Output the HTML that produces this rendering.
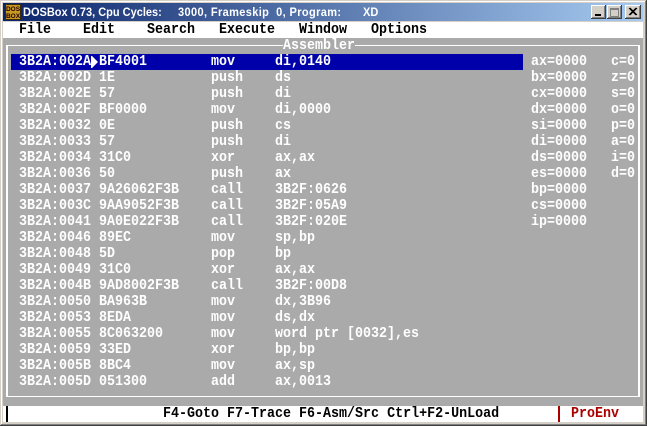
<!DOCTYPE html>
<html><head><meta charset="utf-8"><style>
html,body{margin:0;padding:0;background:#d4d0c8}
#w{position:relative;width:647px;height:426px;overflow:hidden;background:#d4d0c8}
#w div{position:absolute}
.t{font:bold 15px/16px "Liberation Mono",monospace;white-space:pre;color:#fff;height:16px;transform:scaleX(.889);transform-origin:0 0}
.k{color:#000}
.h{font:bold 12px/16px "Liberation Sans",sans-serif;color:#fff;white-space:pre;top:4px;height:16px;transform:scaleX(.917);transform-origin:0 0}
</style></head><body><div id="w">
<div style="left:0;top:0;width:647px;height:1px;background:#d4d0c8"></div>
<div style="left:1px;top:1px;width:644px;height:1px;background:#fff"></div>
<div style="left:1px;top:1px;width:1px;height:423px;background:#fff"></div>
<div style="left:645px;top:1px;width:1px;height:424px;background:#808080"></div>
<div style="left:1px;top:424px;width:645px;height:1px;background:#808080"></div>
<div style="left:646px;top:0;width:1px;height:426px;background:#404040"></div>
<div style="left:0;top:425px;width:647px;height:1px;background:#404040"></div>

<div style="left:3px;top:3px;width:640px;height:18px;background:linear-gradient(90deg,#0a246a,#a6caf0)"></div>
<div style="left:5px;top:4px;width:16px;height:16px;background:#3a2a08"></div>
<div style="left:6px;top:5px;width:14px;height:14px;background:#c89a20"></div>
<svg style="position:absolute;left:5px;top:4px" width="16" height="16"><text x="8" y="7" text-anchor="middle" font-family="Liberation Sans" font-size="6.5" font-weight="bold" fill="#200">DOS</text><text x="8" y="14" text-anchor="middle" font-family="Liberation Sans" font-size="6.5" font-weight="bold" fill="#200">BOX</text></svg>
<div class="h" style="left:23px">DOSBox 0.73, Cpu Cycles:</div>
<div class="h" style="left:178px;letter-spacing:.41px">3000, Frameskip  0, Program:</div>
<div class="h" style="left:363px">XD</div>

<div style="left:591px;top:5px;width:14px;height:13px;background:#d4d0c8;border-right:1px solid #404040;border-bottom:1px solid #404040;box-shadow:inset 1px 1px 0 #fff,inset -1px -1px 0 #808080"></div>
<div style="left:595px;top:14px;width:6px;height:2px;background:#000"></div>
<div style="left:607px;top:5px;width:14px;height:13px;background:#d4d0c8;border-right:1px solid #404040;border-bottom:1px solid #404040;box-shadow:inset 1px 1px 0 #fff,inset -1px -1px 0 #808080"></div>
<div style="left:610px;top:8px;width:7px;height:6px;border:1px solid #808080;border-top-width:2px"></div>
<div style="left:625px;top:5px;width:15px;height:13px;background:#d4d0c8;border-right:1px solid #404040;border-bottom:1px solid #404040;box-shadow:inset 1px 1px 0 #fff,inset -1px -1px 0 #808080"></div>
<svg style="position:absolute;left:625px;top:5px" width="16" height="14"><path d="M4 3l7 7M5 3l7 7M11 3l-7 7M12 3l-7 7" stroke="#000" stroke-width="1" fill="none"/></svg>

<div style="left:3px;top:22px;width:640px;height:400px;background:#aaa"></div>
<div style="left:3px;top:22px;width:640px;height:16px;background:#fff"></div>
<div style="left:3px;top:406px;width:640px;height:16px;background:#fff"></div>

<div class="t k" style="left:19px;top:22px">File</div>
<div class="t k" style="left:83px;top:22px">Edit</div>
<div class="t k" style="left:147px;top:22px">Search</div>
<div class="t k" style="left:219px;top:22px">Execute</div>
<div class="t k" style="left:299px;top:22px">Window</div>
<div class="t k" style="left:371px;top:22px">Options</div>

<div style="left:6px;top:45px;width:630px;height:350px;border:solid #fff;border-width:1px 2px"></div>
<div style="left:283px;top:38px;width:72px;height:16px;background:#aaa"></div>
<div class="t" style="left:283px;top:38px">Assembler</div>
<div style="left:11px;top:54px;width:512px;height:16px;background:#0000aa"></div>

<div class="t" style="left:19px;top:54px">3B2A:002A</div><svg style="position:absolute;left:91px;top:54px" width="8" height="16"><path d="M0 2h1l6 6-6 6H0z" fill="#fff"/></svg><div class="t" style="left:99px;top:54px">BF4001</div><div class="t" style="left:211px;top:54px">mov</div><div class="t" style="left:275px;top:54px">di,0140</div>
<div class="t" style="left:19px;top:70px">3B2A:002D 1E</div><div class="t" style="left:211px;top:70px">push    ds</div>
<div class="t" style="left:19px;top:86px">3B2A:002E 57</div><div class="t" style="left:211px;top:86px">push    di</div>
<div class="t" style="left:19px;top:102px">3B2A:002F BF0000</div><div class="t" style="left:211px;top:102px">mov     di,0000</div>
<div class="t" style="left:19px;top:118px">3B2A:0032 0E</div><div class="t" style="left:211px;top:118px">push    cs</div>
<div class="t" style="left:19px;top:134px">3B2A:0033 57</div><div class="t" style="left:211px;top:134px">push    di</div>
<div class="t" style="left:19px;top:150px">3B2A:0034 31C0</div><div class="t" style="left:211px;top:150px">xor     ax,ax</div>
<div class="t" style="left:19px;top:166px">3B2A:0036 50</div><div class="t" style="left:211px;top:166px">push    ax</div>
<div class="t" style="left:19px;top:182px">3B2A:0037 9A26062F3B</div><div class="t" style="left:211px;top:182px">call    3B2F:0626</div>
<div class="t" style="left:19px;top:198px">3B2A:003C 9AA9052F3B</div><div class="t" style="left:211px;top:198px">call    3B2F:05A9</div>
<div class="t" style="left:19px;top:214px">3B2A:0041 9A0E022F3B</div><div class="t" style="left:211px;top:214px">call    3B2F:020E</div>
<div class="t" style="left:19px;top:230px">3B2A:0046 89EC</div><div class="t" style="left:211px;top:230px">mov     sp,bp</div>
<div class="t" style="left:19px;top:246px">3B2A:0048 5D</div><div class="t" style="left:211px;top:246px">pop     bp</div>
<div class="t" style="left:19px;top:262px">3B2A:0049 31C0</div><div class="t" style="left:211px;top:262px">xor     ax,ax</div>
<div class="t" style="left:19px;top:278px">3B2A:004B 9AD8002F3B</div><div class="t" style="left:211px;top:278px">call    3B2F:00D8</div>
<div class="t" style="left:19px;top:294px">3B2A:0050 BA963B</div><div class="t" style="left:211px;top:294px">mov     dx,3B96</div>
<div class="t" style="left:19px;top:310px">3B2A:0053 8EDA</div><div class="t" style="left:211px;top:310px">mov     ds,dx</div>
<div class="t" style="left:19px;top:326px">3B2A:0055 8C063200</div><div class="t" style="left:211px;top:326px">mov     word ptr [0032],es</div>
<div class="t" style="left:19px;top:342px">3B2A:0059 33ED</div><div class="t" style="left:211px;top:342px">xor     bp,bp</div>
<div class="t" style="left:19px;top:358px">3B2A:005B 8BC4</div><div class="t" style="left:211px;top:358px">mov     ax,sp</div>
<div class="t" style="left:19px;top:374px">3B2A:005D 051300</div><div class="t" style="left:211px;top:374px">add     ax,0013</div>

<div class="t" style="left:531px;top:54px">ax=0000</div><div class="t" style="left:611px;top:54px">c=0</div>
<div class="t" style="left:531px;top:70px">bx=0000</div><div class="t" style="left:611px;top:70px">z=0</div>
<div class="t" style="left:531px;top:86px">cx=0000</div><div class="t" style="left:611px;top:86px">s=0</div>
<div class="t" style="left:531px;top:102px">dx=0000</div><div class="t" style="left:611px;top:102px">o=0</div>
<div class="t" style="left:531px;top:118px">si=0000</div><div class="t" style="left:611px;top:118px">p=0</div>
<div class="t" style="left:531px;top:134px">di=0000</div><div class="t" style="left:611px;top:134px">a=0</div>
<div class="t" style="left:531px;top:150px">ds=0000</div><div class="t" style="left:611px;top:150px">i=0</div>
<div class="t" style="left:531px;top:166px">es=0000</div><div class="t" style="left:611px;top:166px">d=0</div>
<div class="t" style="left:531px;top:182px">bp=0000</div>
<div class="t" style="left:531px;top:198px">cs=0000</div>
<div class="t" style="left:531px;top:214px">ip=0000</div>

<div style="left:6px;top:406px;width:2px;height:16px;background:#000"></div>
<div class="t k" style="left:163px;top:406px">F4-Goto F7-Trace F6-Asm/Src Ctrl+F2-UnLoad</div>
<div style="left:558px;top:406px;width:2px;height:16px;background:#aa0000"></div>
<div class="t" style="left:571px;top:406px;color:#aa0000">ProEnv</div>
</div></body></html>
